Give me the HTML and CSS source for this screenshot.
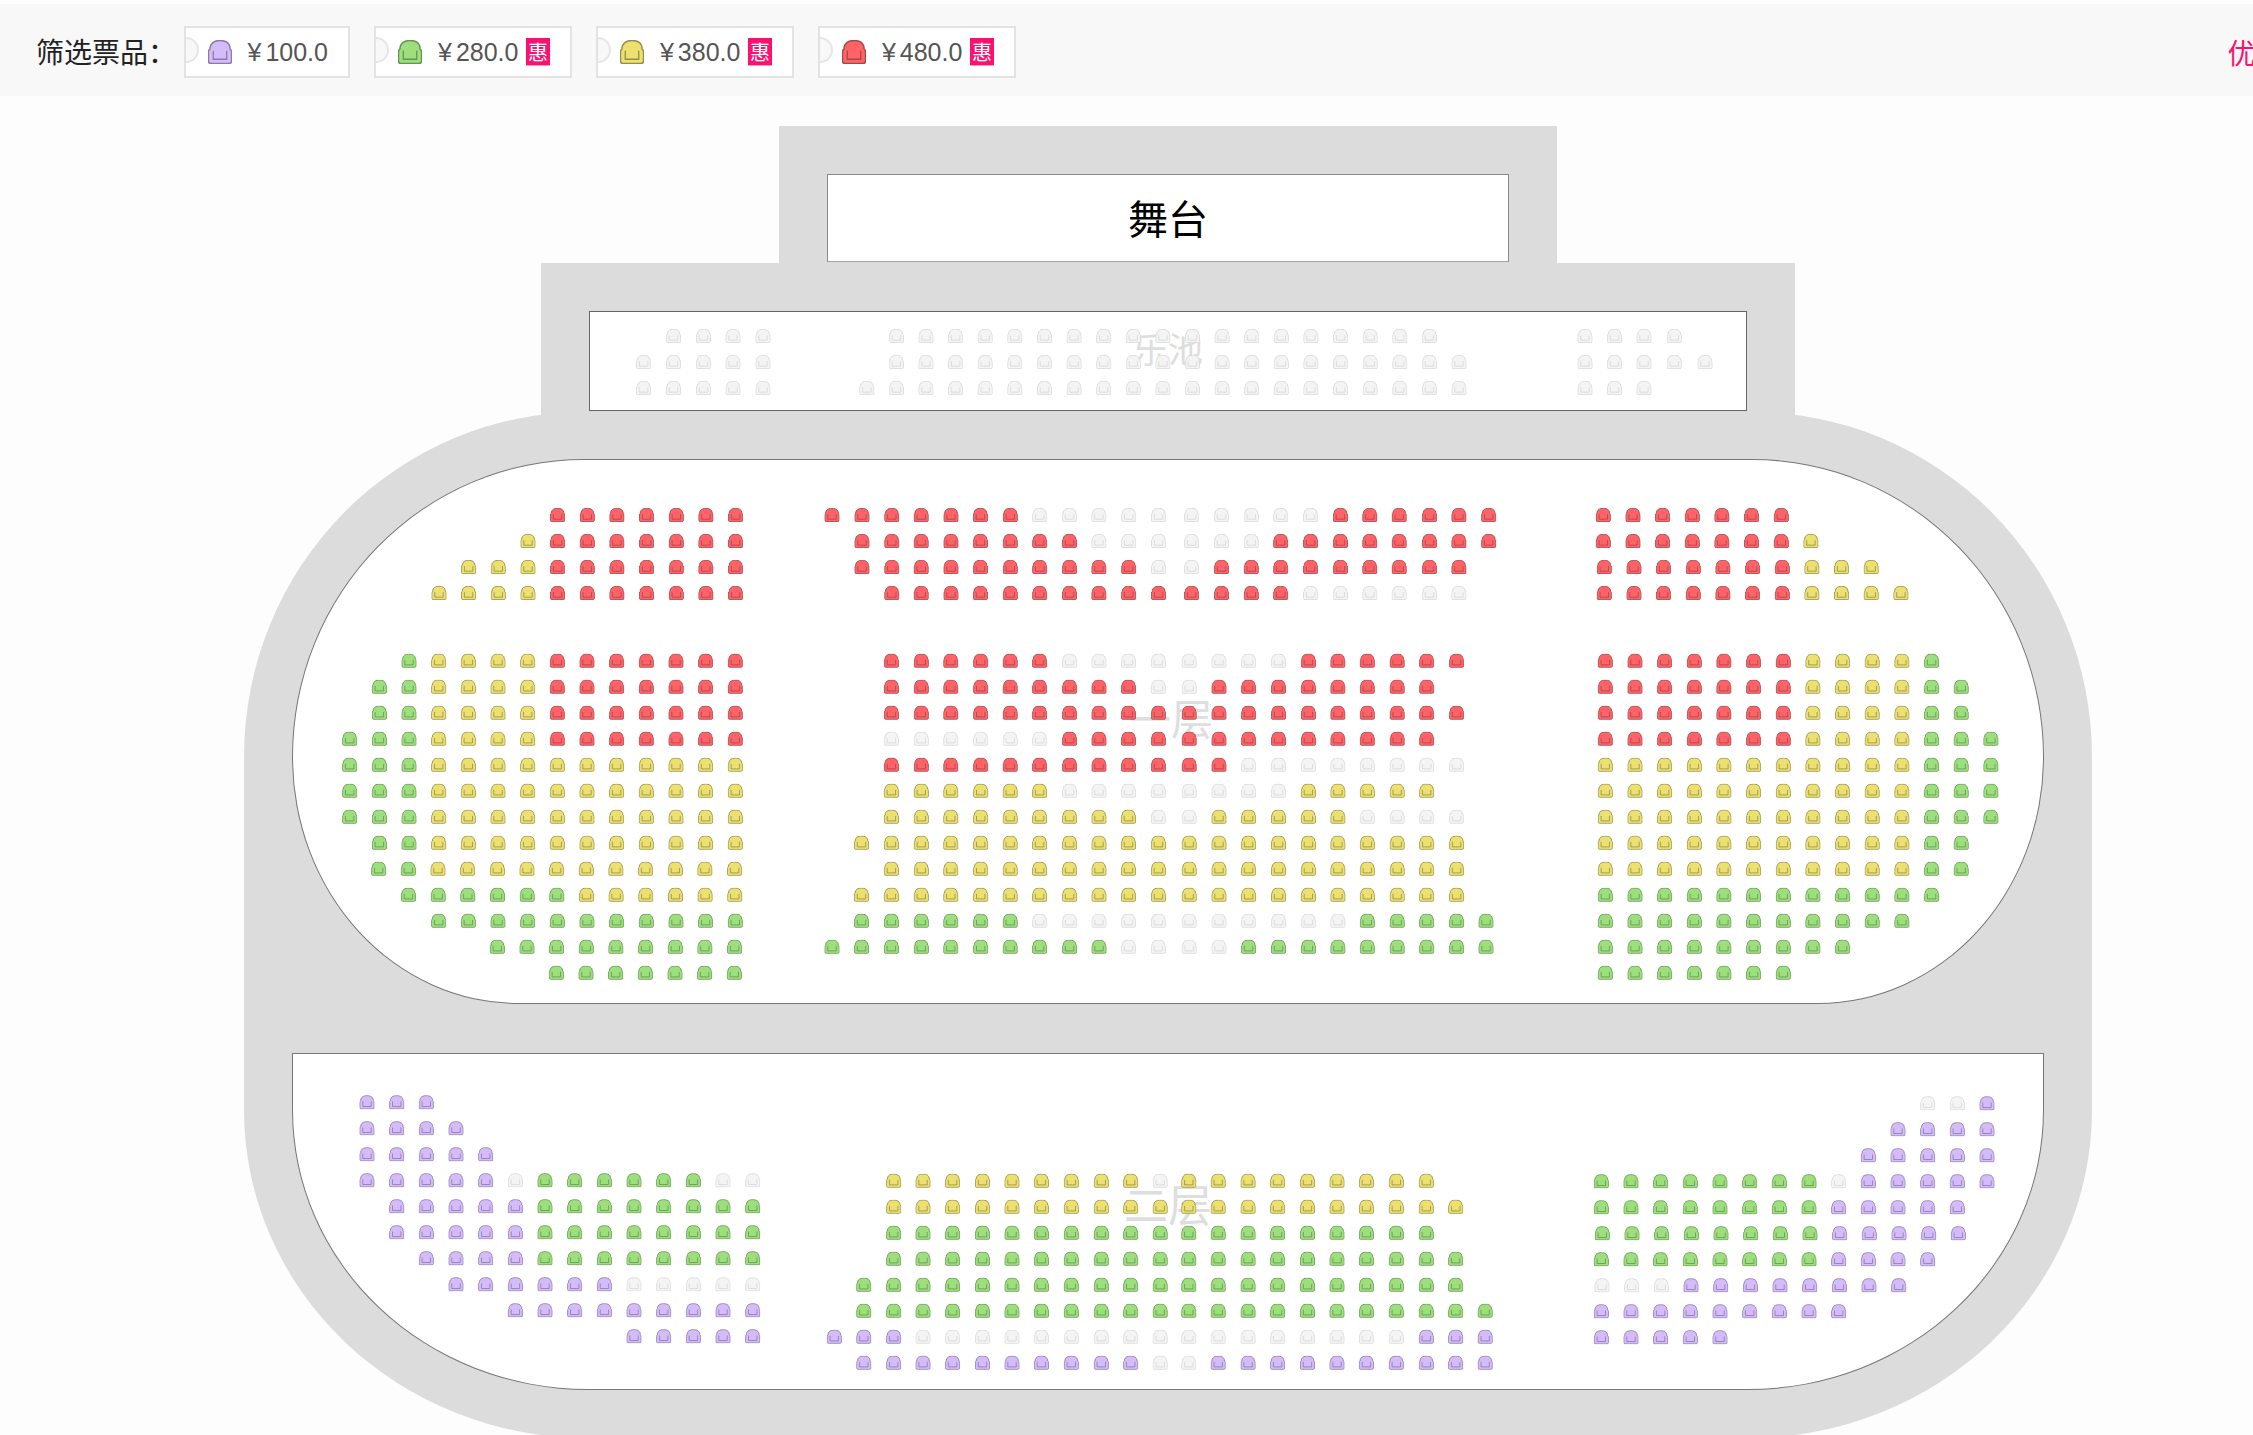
FILE: index.html
```html
<!DOCTYPE html>
<html lang="zh-CN">
<head>
<meta charset="utf-8">
<title>选座</title>
<link rel="stylesheet" href="styles.css">
</head>
<body>
<svg class="defs" aria-hidden="true">
  <symbol id="chair" viewBox="0 0 15 14" preserveAspectRatio="none">
    <path class="chair-body" d="M1.200 5.300C1.200 1.800 4 .3 7.500.3s6.300 1.500 6.300 5C14.400 5.600 14.700 6.200 14.700 7.100V12.200C14.700 13.100 14 13.700 13.100 13.700H1.900C1 13.700.3 13.100.3 12.200V7.100C.3 6.200.6 5.600 1.200 5.300Z"/>
    <path class="chair-seat" d="M3.300 6.200V11.200H11.700V6.200"/>
  </symbol>
</svg>
<div class="page">
  <header class="filter-bar">
    <span class="filter-title">筛选票品：</span>
    <div class="ticket">
      <svg class="ticket-icon seat-p"><use href="#chair"/></svg>
      <span class="price"><span class="yen">¥</span>100.0</span>
    </div>
    <div class="ticket">
      <svg class="ticket-icon seat-g"><use href="#chair"/></svg>
      <span class="price"><span class="yen">¥</span>280.0</span>
      <span class="badge">惠</span>
    </div>
    <div class="ticket">
      <svg class="ticket-icon seat-y"><use href="#chair"/></svg>
      <span class="price"><span class="yen">¥</span>380.0</span>
      <span class="badge">惠</span>
    </div>
    <div class="ticket">
      <svg class="ticket-icon seat-r"><use href="#chair"/></svg>
      <span class="price"><span class="yen">¥</span>480.0</span>
      <span class="badge">惠</span>
    </div>
    <span class="promo">优惠</span>
  </header>

  <main class="venue">
    <div class="stage-back">
      <div class="stage">舞台</div>
    </div>
    <div class="pit-back">
      <div class="pit"><span class="area-label pit-label">乐池</span></div>
    </div>
    <div class="oval">
      <div class="floor floor-one"><span class="area-label floor-one-label">一层</span></div>
      <div class="floor floor-two"><span class="area-label floor-two-label">二层</span></div>
    </div>
  </main>

  <svg class="seat-layer" id="seats" width="2253" height="1435"></svg>
</div>
<script src="seats.js"></script>
</body>
</html>
```
FILE: styles.css
```css
html, body {
  margin: 0;
  height: 1435px;
  overflow: hidden;
  background: #fdfdfd;
}

body {
  font-family: "Noto Sans CJK SC", "Liberation Sans", sans-serif;
}

.defs {
  position: absolute;
  width: 0;
  height: 0;
}

.page {
  position: relative;
  width: 2253px;
  height: 1435px;
  padding-top: 4px;
  box-sizing: border-box;
  overflow: hidden;
}

/* filter bar */
.filter-bar {
  display: flex;
  align-items: center;
  box-sizing: border-box;
  height: 92px;
  padding: 4px 0 0 36px;
  background: #f8f8f8;
  white-space: nowrap;
  overflow: hidden;
}

.filter-title {
  width: 148px;
  flex-shrink: 0;
  margin-top: -3px;
  font-size: 28px;
  line-height: 40px;
  color: #222;
}

.ticket {
  position: relative;
  display: flex;
  align-items: center;
  flex-shrink: 0;
  box-sizing: border-box;
  height: 52px;
  margin-right: 24px;
  padding: 0 20.500px 0 21.500px;
  background: #fff;
  border: 2px solid #e3e3e3;
  overflow: hidden;
}

.ticket::before {
  content: "";
  position: absolute;
  left: -13px;
  top: 9px;
  width: 26px;
  height: 26px;
  box-sizing: border-box;
  border: 2px solid #e6e6e6;
  border-radius: 50%;
  background: #f8f8f8;
}

.ticket-icon {
  width: 24px;
  height: 24px;
  margin-right: 16px;
  flex-shrink: 0;
}

.price {
  font-family: "Liberation Sans", sans-serif;
  font-size: 25px;
  line-height: 30px;
  color: #555;
}

.yen {
  margin-right: 4px;
}

.badge {
  box-sizing: border-box;
  width: 24px;
  height: 28px;
  margin-left: 7.500px;
  background: #ff0f6f;
  border-bottom: 1px solid #ff9ac2;
  color: #fff;
  font-size: 20px;
  line-height: 27px;
  text-align: center;
}

.promo {
  flex-shrink: 0;
  margin-left: 1187px;
  font-size: 28px;
  line-height: 40px;
  color: #ff0f6f;
}

/* venue */
.venue {
  display: flex;
  flex-direction: column;
  align-items: center;
  width: 1848px;
  margin-left: 244px;
  padding-top: 30px;
}

.stage-back {
  box-sizing: border-box;
  width: 778px;
  height: 137px;
  padding-top: 48px;
  background: #dcdcdc;
}

.stage {
  box-sizing: border-box;
  display: flex;
  align-items: center;
  justify-content: center;
  width: 682px;
  height: 88px;
  margin: 0 auto;
  padding-bottom: 2px;
  background: #fff;
  border: 1px solid #8a8a8a;
  border-bottom-color: #a5a5a5;
  color: #000;
  font-size: 40px;
  line-height: 48px;
}

.pit-back {
  box-sizing: border-box;
  width: 1254px;
  height: 160px;
  margin-bottom: -11px;
  padding-top: 48px;
  background: #dcdcdc;
}

.pit {
  position: relative;
  box-sizing: border-box;
  width: 1158px;
  height: 100px;
  margin: 0 auto;
  background: #fff;
  border: 1px solid #666;
}

.oval {
  display: flex;
  flex-direction: column;
  gap: 49px;
  box-sizing: border-box;
  width: 1848px;
  height: 1026px;
  padding: 47px 48px 48px;
  background: #dcdcdc;
  border-radius: 340px 340px 344px 344px / 345px 345px 328px 328px;
}

.floor {
  position: relative;
  box-sizing: border-box;
  background: #fff;
  border: 1px solid #777;
}

.floor-one {
  height: 545px;
  border-radius: 292px 292px 226px 226px / 298px 298px 247px 247px;
}

.floor-two {
  height: 337px;
  border-radius: 0 0 296px 296px / 0 0 280px 280px;
}

.area-label {
  position: absolute;
  left: 50%;
  color: #dedede;
  white-space: nowrap;
}

.pit-label {
  top: 14px;
  font-size: 35px;
  line-height: 44px;
  transform: translateX(-50%);
}

.floor-one-label {
  top: 235px;
  font-size: 42px;
  line-height: 44px;
  transform: translateX(calc(-50% + 3px));
}

.floor-two-label {
  top: 127px;
  font-size: 44px;
  line-height: 44px;
  transform: translateX(-50%);
}

/* seats: a free canvas laid over the hall */
.seat-layer {
  position: absolute;
  left: 0;
  top: 0;
}

.chair-body {
  stroke-width: .9;
}

.chair-seat {
  fill: none;
  stroke-width: .8;
}

.seat-r { fill: #ff6367; stroke: #a04a4e; }
.seat-y { fill: #ebe070; stroke: #948d4c; }
.seat-g { fill: #9ddf7c; stroke: #659354; }
.seat-p { fill: #d4bcfb; stroke: #8b79a6; }
.seat-e { fill: #f4f4f4; stroke: #d8d8d8; }
```
FILE: seats.js
```js
var SVG_NS = "http://www.w3.org/2000/svg";
var layer = document.getElementById("seats");
var PITCH = 29.66;
var ROW = 26;

function evenColumns(start, step, count) {
  var xs = [];
  for (var i = 0; i < count; i++) xs.push(start + step * i);
  return xs;
}

function addSeat(cx, cy, kind) {
  var use = document.createElementNS(SVG_NS, "use");
  use.setAttribute("href", "#chair");
  use.setAttribute("x", (cx - 7.5).toFixed(1));
  use.setAttribute("y", (cy - 7).toFixed(1));
  use.setAttribute("width", 15);
  use.setAttribute("height", 14);
  use.setAttribute("class", "seat-" + kind);
  layer.appendChild(use);
}

/* each row: "from-to kind" runs of column indexes, optional "@dx" shift */
function block(xs, y0, rows, step) {
  rows.forEach(function (row, r) {
    var dx = 0;
    row.split(" ").forEach(function (run) {
      if (!run) return;
      if (run.charAt(0) === "@") { dx = parseFloat(run.slice(1)); return; }
      var kind = run.charAt(run.length - 1);
      var parts = run.slice(0, -1).split("-");
      var from = +parts[0];
      var to = parts.length > 1 ? +parts[1] : from;
      for (var c = from; c <= to; c++) addSeat(xs[c] + dx, y0 + r * (step || ROW), kind);
    });
  });
}

/* pit */
var pitLeft = [643.6, 673.5, 703.5, 733, 763];
var pitMid = evenColumns(866.8, 29.61, 21);
var pitRight = [1585, 1614.5, 1644, 1674.3, 1705];
block(pitLeft, 336, ["1-4e", "0-4e", "0-4e"]);
block(pitMid, 336, ["1-19e", "1-20e", "0-20e"]);
block(pitRight, 336, ["0-3e", "0-4e", "0-2e"]);

/* floor one: left */
var c = evenColumns(349.7, PITCH, 14);
block(c, 515, [
  "@.3 7-13r",
  "@.3 6y 7-13r",
  "@.3 4-6y 7-13r",
  "@.3 3-6y 7-13r"
]);
block(c, 660.7, [
  "2g 3-6y 7-13r",
  "1-2g 3-6y 7-13r",
  "1-2g 3-6y 7-13r",
  "0-2g 3-6y 7-13r",
  "0-2g 3-13y",
  "0-2g 3-13y",
  "0-2g 3-13y",
  "1-2g 3-13y",
  "@-.7 1-2g 3-13y",
  "@-.5 2-7g 8-13y",
  "3-13g",
  "@-.7 5-13g",
  "@-1 7-13g"
]);

/* floor one: centre */
var d = [832, 862, 891.8, 921.2, 951, 980.4, 1010.3, 1039.7, 1069.5, 1098.9, 1128.7, 1158.6,
         1191.6, 1221.5, 1251.3, 1280.7, 1310.6, 1340.4, 1369.8, 1399.2, 1429.5, 1458.9, 1488.7];
block(d, 515, [
  "0-6r 7-16e 17-22r",
  "1-8r 9-14e 15-22r",
  "1-10r 11-12e 13-21r",
  "2-15r 16-21e"
]);
var e = [832, 861.5, 891.4, 921.3, 950.8, 980.7, 1010.2, 1039.6, 1069.6, 1099, 1128.5, 1158.4,
         1189.2, 1219, 1248.6, 1278.5, 1308.4, 1337.9, 1367.3, 1397.2, 1426.7, 1456.6, 1486];
block(e, 660.7, [
  "2-7r 8-15e 16-21r",
  "2-10r 11-12e 13-20r",
  "2-21r",
  "2-7e 8-20r",
  "2-13r 14-21e",
  "2-7y 8-15e 16-20y",
  "2-10y 11-12e 13-17y 18-21e",
  "1-21y",
  "2-21y",
  "1-21y",
  "1-6g 7-17e 18-22g",
  "0-9g 10-13e 14-22g"
]);

/* floor one: right */
var t = evenColumns(1603.3, PITCH, 11);
block(t, 515, [
  "0-6r",
  "0-6r 7y",
  "@1 0-6r 7-9y",
  "@1 0-6r 7-10y"
]);
var f = evenColumns(1605.3, PITCH, 14);
block(f, 660.7, [
  "0-6r 7-10y 11g",
  "0-6r 7-10y 11-12g",
  "0-6r 7-10y 11-12g",
  "0-6r 7-10y 11-13g",
  "0-10y 11-13g",
  "0-10y 11-13g",
  "0-10y 11-13g",
  "0-10y 11-12g",
  "0-10y 11-12g",
  "0-11g",
  "0-10g",
  "0-8g",
  "0-6g"
]);

/* floor two: left */
var h = evenColumns(367, 29.67, 14);
block(h, 1102.3, [
  "0-2p",
  "0-3p",
  "0-4p",
  "0-4p 5e 6-11g 12-13e",
  "1-5p 6-13g",
  "1-5p 6-13g",
  "2-5p 6-13g",
  "3-8p 9-13e",
  "5-13p",
  "9-13p"
]);

/* floor two: centre */
var k = [834.3, 863.8, 893.7, 923, 952.6, 982.5, 1012, 1041.4, 1071.3, 1101.3, 1130.7, 1160.2,
         1188.8, 1218.2, 1248.1, 1277.6, 1307.5, 1337, 1366.4, 1396.3, 1426.3, 1455.7, 1485.2];
block(k, 1180.7, [
  "2-10y 11e 12-20y",
  "2-21y",
  "2-20g",
  "2-21g",
  "1-21g",
  "1-22g",
  "0-2p 3-19e 20-22p",
  "1-10p 11-12e 13-22p"
]);

/* floor two: right */
var m = evenColumns(1601.3, 29.67, 14);
block(m, 1103.3, [
  "11-12e 13p",
  "10-13p",
  "9-13p",
  "0-7g 8e 9-13p",
  "0-7g 8-12p",
  "@1 0-7g 8-12p",
  "0-7g 8-11p",
  "@.7 0-2e 3-10p",
  "0-8p",
  "0-4p"
]);
```
